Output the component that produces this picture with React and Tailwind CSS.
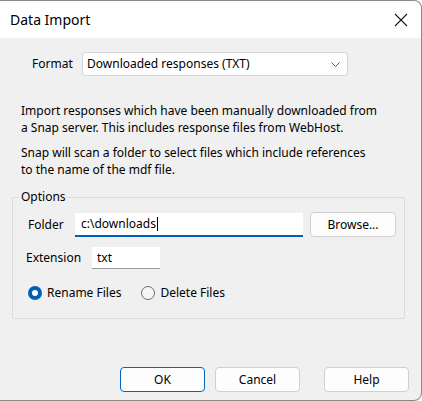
import { useState } from 'react';

const font = { fontFamily: '"Segoe UI", "Noto Sans", sans-serif' };

function PushButton({ children, primary, className = '' }) {
  return (
    <button
      type="button"
      className={`h-[25px] w-[86px] rounded-[4px] border bg-[#fdfdfd] text-[12px] text-black ${
        primary ? 'border-[#0067c0]' : 'border-[#d0d0d0]'
      } ${className}`}
    >
      {children}
    </button>
  );
}

function Radio({ checked, label, onClick }) {
  return (
    <label className="flex items-center gap-[5px] cursor-pointer" onClick={onClick}>
      {checked ? (
        <span className="flex h-[14px] w-[14px] items-center justify-center rounded-full bg-[#005fb8]">
          <span className="h-[6px] w-[6px] rounded-full bg-white" />
        </span>
      ) : (
        <span className="h-[14px] w-[14px] rounded-full border border-[#6b6b6b] bg-[#f5f5f5]" />
      )}
      <span>{label}</span>
    </label>
  );
}

export default function App() {
  const [mode, setMode] = useState('rename');

  return (
    <div className="h-[401px] w-[422px] overflow-hidden bg-white text-[12px] text-black" style={font}>
      <div className="flex h-[401px] w-[422px] flex-col rounded-tr-[8px] rounded-br-[8px] border-t border-r border-b border-[#8a8a8a] bg-[#f0f0f0]">
        {/* title bar */}
        <div className="flex h-[37px] items-center justify-between rounded-tr-[8px] bg-white pl-[10px] pr-[12px]">
          <span className="text-[14px] leading-none">Data Import</span>
          <svg width="14" height="14" viewBox="0 0 14 14" className="mr-[1px]">
            <path d="M1 1 L13 13 M13 1 L1 13" stroke="#1a1a1a" strokeWidth="1.1" />
          </svg>
        </div>

        {/* body */}
        <div className="flex flex-1 flex-col px-[12px]">
          <div className="mt-[14px] flex h-[24px] items-center">
            <span className="ml-[20px] w-[50px]">Format</span>
            <div className="flex h-[24px] w-[266px] items-center justify-between rounded-[3px] border border-[#d6d6d6] bg-white pl-[4px] pr-[7px]">
              <span>Downloaded responses (TXT)</span>
              <svg width="9" height="5" viewBox="0 0 9 5">
                <path d="M0.5 0.5 L4.5 4.5 L8.5 0.5" fill="none" stroke="#5a5a5a" strokeWidth="1" />
              </svg>
            </div>
          </div>

          <p className="mt-[26px] ml-[9px] leading-[17px]">
            Import responses which have been manually downloaded from
            <br />
            a Snap server. This includes response files from WebHost.
          </p>
          <p className="mt-[8px] ml-[9px] leading-[17px]">
            Snap will scan a folder to select files which include references
            <br />
            to the name of the mdf file.
          </p>

          {/* options group */}
          <div className="mt-[10px] flex w-[393px] flex-col">
            <div className="relative z-10 flex h-[18px] items-center pl-[8px]">
              <span className="bg-[#f0f0f0] px-[1px]">Options</span>
            </div>
            <div className="-mt-[9px] flex h-[122px] flex-col rounded-[2px] border border-[#dcdcdc] pt-[15px]">
              <div className="flex h-[24px] items-center">
                <span className="ml-[15px] w-[47px]">Folder</span>
                <div className="flex h-[24px] w-[228px] items-center border-b-2 border-[#005fb8] bg-white pl-[6px]">
                  <span>c:\downloads</span>
                  <span className="ml-[1px] h-[14px] w-[1px] bg-black" />
                </div>
                <PushButton className="ml-[7px] -mt-[1px] h-[25px] w-[84px]">Browse...</PushButton>
              </div>
              <div className="mt-[10px] flex h-[22px] items-center">
                <span className="ml-[13px] w-[66px]">Extension</span>
                <div className="flex h-[22px] w-[68px] items-center border-b border-[#9a9a9a] bg-white pl-[5px]">
                  txt
                </div>
              </div>
              <div className="mt-[15px] flex items-center gap-[20px] pl-[15px]">
                <Radio checked={mode === 'rename'} label="Rename Files" onClick={() => setMode('rename')} />
                <Radio checked={mode === 'delete'} label="Delete Files" onClick={() => setMode('delete')} />
              </div>
            </div>
          </div>

          {/* buttons */}
          <div className="mt-[48px] flex items-center pl-[108px]">
            <PushButton primary>OK</PushButton>
            <PushButton className="ml-[10px]">Cancel</PushButton>
            <PushButton className="ml-[24px]">Help</PushButton>
          </div>
        </div>
      </div>
    </div>
  );
}
